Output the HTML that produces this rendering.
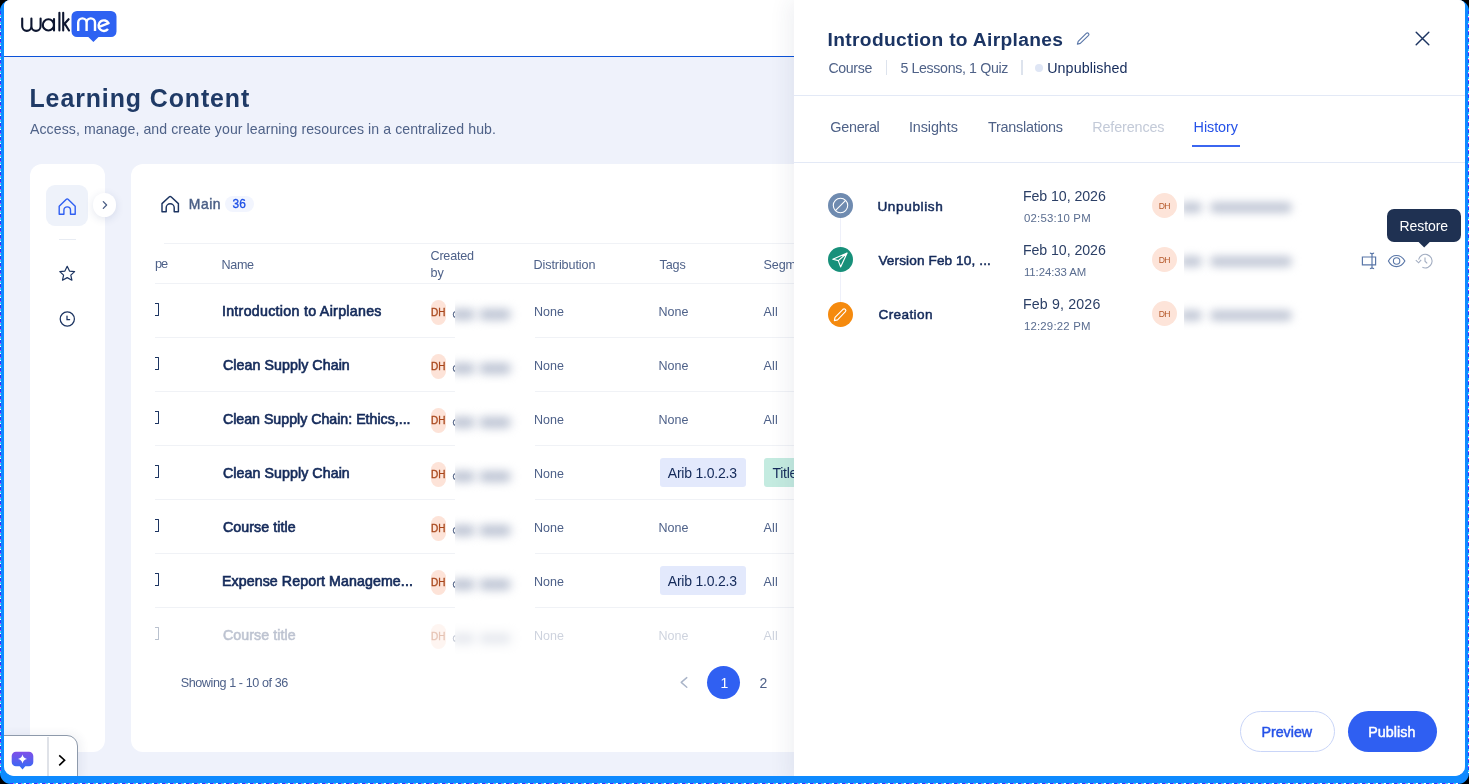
<!DOCTYPE html>
<html><head><meta charset="utf-8">
<style>
*{box-sizing:border-box;margin:0;padding:0}
html,body{width:1469px;height:784px;overflow:hidden;background:#000;font-family:"Liberation Sans",sans-serif}
.abs{position:absolute}
.t{position:absolute;white-space:nowrap}
#frame{position:absolute;left:0;top:0;width:1469px;height:784px;background:#0e8aff;border-radius:11px}
#noiseL{position:absolute;left:0;top:11px;width:1px;height:762px;background:repeating-linear-gradient(180deg,#2a3cff 0 3px,#e040f0 3px 4px,#30d8ff 4px 6px,#ffffff 6px 7px)}
#noiseR{position:absolute;left:1468px;top:11px;width:1px;height:762px;background:repeating-linear-gradient(180deg,#2a3cff 0 3px,#30d8ff 3px 5px,#ffffff 5px 6px,#e040f0 6px 7px)}
#noiseB{position:absolute;left:10px;top:783px;width:1449px;height:1px;background:repeating-linear-gradient(90deg,#2a3cff 0 3px,#e040f0 3px 4px,#30d8ff 4px 6px,#ffffff 6px 8px)}
#screen{position:absolute;left:4px;top:0;width:1461px;height:776px;background:#eff2fb;border-radius:6px 6px 10px 10px;overflow:hidden}
#inner{position:absolute;left:-4px;top:0;width:1469px;height:784px;will-change:transform}
.row-line{position:absolute;left:155px;width:640px;height:1px;background:#f0f2f6}
.av{position:absolute;width:15px;height:25px;border-radius:8px;background:#fde3d8}
.blur{position:absolute;left:455px;width:80px;height:50px;background:#fff;overflow:hidden}
.blur i{position:absolute;top:16.5px;height:11px;border-radius:5px;background:#bcc3d3;filter:blur(4.8px)}
.brk{position:absolute;left:155.3px;width:3.3px;height:13px;border:1.5px solid #1c3461;border-left:none;border-radius:0 1px 1px 0}
.tag{position:absolute;height:29px;border-radius:3px}
.hcirc{position:absolute;left:827.7px;width:25px;height:25px;border-radius:50%}
.hav{position:absolute;left:1152.2px;width:25px;height:25px;border-radius:50%;background:#fde4d9}
.hblur{position:absolute;left:1184px;width:120px;height:30px;overflow:hidden;background:#fff}
.hblur i{position:absolute;top:10px;height:11px;border-radius:5px;background:#c3c9d7;filter:blur(4.2px)}
</style></head>
<body>
<div id="frame"></div>
<div id="noiseL"></div><div id="noiseR"></div><div id="noiseB"></div>
<div id="screen"><div id="inner">

<!-- header -->
<div class="abs" style="left:0;top:0;width:1469px;height:57px;background:#fff;border-bottom:1px solid #0b52d8"></div>
<!-- walkme logo -->
<svg class="abs" style="left:0;top:0" width="130" height="50" viewBox="0 0 130 50">
 <g fill="none" stroke="#0d1630" stroke-width="2.1" stroke-linecap="round" stroke-linejoin="round">
  <path d="M22.2 18.5 V26.3 a4.6 4.6 0 0 0 9.2 0 V18.5 M31.4 26.3 a4.6 4.6 0 0 0 9.2 0 V18.5"/>
  <circle cx="48.4" cy="24.9" r="5.6"/>
  <path d="M54 19 V30.5"/>
  <path d="M59.4 12.8 V30.5"/>
  <path d="M63.2 12.8 V30.5 M63.2 25.2 L68.6 19.2 M64.8 23.8 L69 30.5"/>
 </g>
 <path d="M77 11 H111 a5.5 5.5 0 0 1 5.5 5.5 V31.5 a5.5 5.5 0 0 1 -5.5 5.5 H98.5 L93.4 42 L88.3 37 H77 a5.5 5.5 0 0 1 -5.5 -5.5 V16.5 a5.5 5.5 0 0 1 5.5 -5.5 Z" fill="#2e62f2"/>
 <g fill="none" stroke="#fff" stroke-width="2.4" stroke-linecap="butt" stroke-linejoin="round">
  <path d="M78.2 31 V22.6 a4.2 4.2 0 0 1 8.4 0 V31 M86.6 22.6 a4.2 4.2 0 0 1 8.4 0 V31"/>
  <path d="M99.2 26.8 L108.6 23.2 a5.3 5.3 0 1 0 -0.6 5.8"/>
 </g>
</svg>

<!-- page title etc -->
<!-- left nav card -->
<div class="abs" style="left:30px;top:164px;width:74.5px;height:587.7px;background:#fff;border-radius:12px"></div>
<div class="abs" style="left:46.3px;top:184.8px;width:41.8px;height:41.7px;background:#eef2fa;border-radius:9px"></div>
<svg class="abs" style="left:56px;top:195px" width="24" height="24" viewBox="0 0 24 24">
 <path d="M3.2 11.2 L10.1 4.4 Q11.2 3.3 12.3 4.4 L19.2 11.2 V19.2 H14.5 V15.2 a3.3 3.3 0 0 0 -6.6 0 V19.2 H3.2 Z" fill="none" stroke="#2f5ff2" stroke-width="1.4" stroke-linejoin="round"/>
</svg>
<div class="abs" style="left:59px;top:239px;width:17px;height:1.3px;background:#e8ecf3"></div>
<svg class="abs" style="left:56px;top:262.8px" width="24" height="22" viewBox="0 0 24 22">
 <path d="M11.2 3.3 L13.5 8.1 L18.6 8.6 L14.8 12.1 L15.9 17.2 L11.2 14.6 L6.5 17.2 L7.6 12.1 L3.8 8.6 L8.9 8.1 Z" fill="none" stroke="#1c3461" stroke-width="1.2" stroke-linejoin="round"/>
</svg>
<svg class="abs" style="left:56px;top:308px" width="24" height="22" viewBox="0 0 24 22">
 <circle cx="11.3" cy="11" r="7.1" fill="none" stroke="#1c3461" stroke-width="1.25"/>
 <path d="M11 8 V11.5 H13.6" fill="none" stroke="#1c3461" stroke-width="1.25" stroke-linecap="round"/>
</svg>

<!-- main card -->
<div class="abs" style="left:131px;top:164px;width:800px;height:587.7px;background:#fff;border-radius:12px"></div>
<!-- expand circle -->
<div class="abs" style="left:92.8px;top:193.2px;width:23.5px;height:23.5px;border-radius:50%;background:#fff;box-shadow:0 2px 8px rgba(40,60,120,0.13)"></div>
<svg class="abs" style="left:98px;top:198px" width="14" height="14" viewBox="0 0 14 14">
 <path d="M5.3 3.6 L8.6 7 L5.3 10.4" fill="none" stroke="#4b5f86" stroke-width="1.3" stroke-linecap="round" stroke-linejoin="round"/>
</svg>
<!-- breadcrumb home -->
<svg class="abs" style="left:158px;top:192px" width="24" height="24" viewBox="0 0 24 24">
 <path d="M4 11.6 L11.1 5 Q12.2 4 13.3 5 L20.4 11.6 V19.7 H16.2 V15.8 a4 4 0 0 0 -8 0 V19.7 H4 Z" fill="none" stroke="#1c3461" stroke-width="1.45" stroke-linejoin="round"/>
</svg>
<div class="abs" style="left:225px;top:195.7px;width:29px;height:16.5px;border-radius:9px;background:#f2f5fe"></div>

<!-- table lines -->
<div class="row-line" style="left:164px;top:243px"></div>
<div class="row-line" style="top:282.5px"></div>
<div class="row-line" style="top:337px"></div>
<div class="row-line" style="top:391px"></div>
<div class="row-line" style="top:445px"></div>
<div class="row-line" style="top:499px"></div>
<div class="row-line" style="top:553px"></div>
<div class="row-line" style="top:607px"></div>

<!-- row decorations -->
<div class="brk" style="top:303px"></div>
<div class="brk" style="top:357px"></div>
<div class="brk" style="top:411px"></div>
<div class="brk" style="top:465px"></div>
<div class="brk" style="top:519px"></div>
<div class="brk" style="top:573px"></div>
<div class="brk" style="top:627px;opacity:0.3"></div>

<div class="av" style="left:430.5px;top:299.8px"></div>
<div class="av" style="left:430.5px;top:353.8px"></div>
<div class="av" style="left:430.5px;top:407.8px"></div>
<div class="av" style="left:430.5px;top:461.8px"></div>
<div class="av" style="left:430.5px;top:515.8px"></div>
<div class="av" style="left:430.5px;top:569.8px"></div>
<div class="av" style="left:430.5px;top:623.8px;opacity:0.35"></div>

<svg class="abs" style="left:451px;top:309px;" width="5" height="10" viewBox="0 0 5 10"><path d="M4.2 2.6 A2.6 3 0 0 0 4.2 8.4" fill="none" stroke="#5b6b8c" stroke-width="1.1"/></svg>
<svg class="abs" style="left:451px;top:363px;" width="5" height="10" viewBox="0 0 5 10"><path d="M4.2 2.6 A2.6 3 0 0 0 4.2 8.4" fill="none" stroke="#5b6b8c" stroke-width="1.1"/></svg>
<svg class="abs" style="left:451px;top:417px;" width="5" height="10" viewBox="0 0 5 10"><path d="M4.2 2.6 A2.6 3 0 0 0 4.2 8.4" fill="none" stroke="#5b6b8c" stroke-width="1.1"/></svg>
<svg class="abs" style="left:451px;top:471px;" width="5" height="10" viewBox="0 0 5 10"><path d="M4.2 2.6 A2.6 3 0 0 0 4.2 8.4" fill="none" stroke="#5b6b8c" stroke-width="1.1"/></svg>
<svg class="abs" style="left:451px;top:525px;" width="5" height="10" viewBox="0 0 5 10"><path d="M4.2 2.6 A2.6 3 0 0 0 4.2 8.4" fill="none" stroke="#5b6b8c" stroke-width="1.1"/></svg>
<svg class="abs" style="left:451px;top:579px;" width="5" height="10" viewBox="0 0 5 10"><path d="M4.2 2.6 A2.6 3 0 0 0 4.2 8.4" fill="none" stroke="#5b6b8c" stroke-width="1.1"/></svg>
<svg class="abs" style="left:451px;top:633px;opacity:0.35;" width="5" height="10" viewBox="0 0 5 10"><path d="M4.2 2.6 A2.6 3 0 0 0 4.2 8.4" fill="none" stroke="#5b6b8c" stroke-width="1.1"/></svg>
<div class="blur" style="top:292px"><i style="left:-4px;width:24px"></i><i style="left:24px;width:32px"></i></div>
<div class="blur" style="top:346px"><i style="left:-4px;width:24px"></i><i style="left:24px;width:32px"></i></div>
<div class="blur" style="top:400px"><i style="left:-4px;width:24px"></i><i style="left:24px;width:32px"></i></div>
<div class="blur" style="top:454px"><i style="left:-4px;width:24px"></i><i style="left:24px;width:32px"></i></div>
<div class="blur" style="top:508px"><i style="left:-4px;width:24px"></i><i style="left:24px;width:32px"></i></div>
<div class="blur" style="top:562px"><i style="left:-4px;width:24px"></i><i style="left:24px;width:32px"></i></div>
<div class="blur" style="top:616px;height:44px;opacity:0.35"><i style="left:-4px;width:24px"></i><i style="left:24px;width:32px"></i></div>

<div class="tag" style="left:660px;top:458px;width:86px;background:#e3e9fc"></div>
<div class="tag" style="left:764px;top:458px;width:40px;background:#c4ebe0"></div>
<div class="tag" style="left:660px;top:566px;width:86px;background:#e3e9fc"></div>

<!-- pagination -->
<svg class="abs" style="left:676px;top:674px" width="16" height="17" viewBox="0 0 16 17">
 <path d="M10.8 3.6 L5.2 8.4 L10.8 13.2" fill="none" stroke="#a9b4c8" stroke-width="1.4" stroke-linecap="round" stroke-linejoin="round"/>
</svg>
<div class="abs" style="left:706.9px;top:665.8px;width:33.2px;height:33.2px;border-radius:50%;background:#3060f2"></div>

<div class="t" style="left:29.50px;top:86.12px;font-size:24.9px;line-height:24.9px;font-weight:bold;color:#1f3a66;letter-spacing:0.917px;">Learning Content</div>
<div class="t" style="left:30.00px;top:122.36px;font-size:14.1px;line-height:14.1px;font-weight:normal;color:#4f6288;letter-spacing:0.085px;">Access, manage, and create your learning resources in a centralized hub.</div>
<div class="t" style="left:188.82px;top:198.13px;font-size:13.9px;line-height:13.9px;font-weight:normal;color:#4b5f86;letter-spacing:0.523px;-webkit-text-stroke:0.45px #4b5f86;">Main</div>
<div class="t" style="left:232.45px;top:198.73px;font-size:11.9px;line-height:11.9px;font-weight:normal;color:#1d4fe6;letter-spacing:0.087px;-webkit-text-stroke:0.3px #1d4fe6;">36</div>
<div class="t" style="left:155.00px;top:258.46px;font-size:12.8px;line-height:12.8px;font-weight:normal;color:#4e6189;letter-spacing:-1.117px;">pe</div>
<div class="t" style="left:221.60px;top:258.63px;font-size:12.6px;line-height:12.6px;font-weight:normal;color:#4e6189;letter-spacing:-0.397px;">Name</div>
<div class="t" style="left:430.50px;top:249.83px;font-size:12.6px;line-height:12.6px;font-weight:normal;color:#4e6189;letter-spacing:-0.217px;">Created</div>
<div class="t" style="left:430.50px;top:266.83px;font-size:12.6px;line-height:12.6px;font-weight:normal;color:#4e6189;letter-spacing:-0.050px;">by</div>
<div class="t" style="left:533.50px;top:258.63px;font-size:12.6px;line-height:12.6px;font-weight:normal;color:#4e6189;letter-spacing:-0.100px;">Distribution</div>
<div class="t" style="left:659.50px;top:258.63px;font-size:12.6px;line-height:12.6px;font-weight:normal;color:#4e6189;letter-spacing:-0.100px;">Tags</div>
<div class="t" style="left:763.50px;top:258.63px;font-size:12.6px;line-height:12.6px;font-weight:normal;color:#4e6189;letter-spacing:-0.100px;">Segm</div>
<div class="t" style="left:221.92px;top:304.48px;font-size:14.2px;line-height:14.2px;font-weight:normal;color:#142a5a;letter-spacing:0.306px;-webkit-text-stroke:0.65px #142a5a;">Introduction to Airplanes</div>
<div class="t" style="left:430.95px;top:307.64px;font-size:10.0px;line-height:10.0px;font-weight:normal;color:#a8471c;letter-spacing:-0.022px;-webkit-text-stroke:0.3px #a8471c;">DH</div>
<div class="t" style="left:534.00px;top:306.02px;font-size:12.5px;line-height:12.5px;font-weight:normal;color:#4e6189;letter-spacing:0.023px;">None</div>
<div class="t" style="left:658.50px;top:306.02px;font-size:12.5px;line-height:12.5px;font-weight:normal;color:#4e6189;letter-spacing:0.023px;">None</div>
<div class="t" style="left:763.50px;top:306.02px;font-size:12.5px;line-height:12.5px;font-weight:normal;color:#4e6189;letter-spacing:0.200px;">All</div>
<div class="t" style="left:222.92px;top:358.48px;font-size:14.2px;line-height:14.2px;font-weight:normal;color:#142a5a;letter-spacing:0.085px;-webkit-text-stroke:0.65px #142a5a;">Clean Supply Chain</div>
<div class="t" style="left:430.95px;top:361.64px;font-size:10.0px;line-height:10.0px;font-weight:normal;color:#a8471c;letter-spacing:-0.022px;-webkit-text-stroke:0.3px #a8471c;">DH</div>
<div class="t" style="left:534.00px;top:360.02px;font-size:12.5px;line-height:12.5px;font-weight:normal;color:#4e6189;letter-spacing:0.023px;">None</div>
<div class="t" style="left:658.50px;top:360.02px;font-size:12.5px;line-height:12.5px;font-weight:normal;color:#4e6189;letter-spacing:0.023px;">None</div>
<div class="t" style="left:763.50px;top:360.02px;font-size:12.5px;line-height:12.5px;font-weight:normal;color:#4e6189;letter-spacing:0.200px;">All</div>
<div class="t" style="left:222.92px;top:412.48px;font-size:14.2px;line-height:14.2px;font-weight:normal;color:#142a5a;letter-spacing:-0.003px;-webkit-text-stroke:0.65px #142a5a;">Clean Supply Chain: Ethics,...</div>
<div class="t" style="left:430.95px;top:415.64px;font-size:10.0px;line-height:10.0px;font-weight:normal;color:#a8471c;letter-spacing:-0.022px;-webkit-text-stroke:0.3px #a8471c;">DH</div>
<div class="t" style="left:534.00px;top:414.02px;font-size:12.5px;line-height:12.5px;font-weight:normal;color:#4e6189;letter-spacing:0.023px;">None</div>
<div class="t" style="left:658.50px;top:414.02px;font-size:12.5px;line-height:12.5px;font-weight:normal;color:#4e6189;letter-spacing:0.023px;">None</div>
<div class="t" style="left:763.50px;top:414.02px;font-size:12.5px;line-height:12.5px;font-weight:normal;color:#4e6189;letter-spacing:0.200px;">All</div>
<div class="t" style="left:222.92px;top:466.48px;font-size:14.2px;line-height:14.2px;font-weight:normal;color:#142a5a;letter-spacing:0.085px;-webkit-text-stroke:0.65px #142a5a;">Clean Supply Chain</div>
<div class="t" style="left:430.95px;top:469.64px;font-size:10.0px;line-height:10.0px;font-weight:normal;color:#a8471c;letter-spacing:-0.022px;-webkit-text-stroke:0.3px #a8471c;">DH</div>
<div class="t" style="left:534.00px;top:468.02px;font-size:12.5px;line-height:12.5px;font-weight:normal;color:#4e6189;letter-spacing:0.023px;">None</div>
<div class="t" style="left:667.80px;top:466.05px;font-size:14px;line-height:14px;font-weight:normal;color:#142a5a;letter-spacing:-0.219px;">Arib 1.0.2.3</div>
<div class="t" style="left:772.40px;top:466.05px;font-size:14px;line-height:14px;font-weight:normal;color:#142a5a;letter-spacing:-0.250px;">Title</div>
<div class="t" style="left:222.92px;top:520.48px;font-size:14.2px;line-height:14.2px;font-weight:normal;color:#142a5a;letter-spacing:0.100px;-webkit-text-stroke:0.65px #142a5a;">Course title</div>
<div class="t" style="left:430.95px;top:523.63px;font-size:10.0px;line-height:10.0px;font-weight:normal;color:#a8471c;letter-spacing:-0.022px;-webkit-text-stroke:0.3px #a8471c;">DH</div>
<div class="t" style="left:534.00px;top:522.02px;font-size:12.5px;line-height:12.5px;font-weight:normal;color:#4e6189;letter-spacing:0.023px;">None</div>
<div class="t" style="left:658.50px;top:522.02px;font-size:12.5px;line-height:12.5px;font-weight:normal;color:#4e6189;letter-spacing:0.023px;">None</div>
<div class="t" style="left:763.50px;top:522.02px;font-size:12.5px;line-height:12.5px;font-weight:normal;color:#4e6189;letter-spacing:0.200px;">All</div>
<div class="t" style="left:221.92px;top:574.48px;font-size:14.2px;line-height:14.2px;font-weight:normal;color:#142a5a;letter-spacing:0.100px;-webkit-text-stroke:0.65px #142a5a;">Expense Report Manageme...</div>
<div class="t" style="left:430.95px;top:577.63px;font-size:10.0px;line-height:10.0px;font-weight:normal;color:#a8471c;letter-spacing:-0.022px;-webkit-text-stroke:0.3px #a8471c;">DH</div>
<div class="t" style="left:534.00px;top:576.02px;font-size:12.5px;line-height:12.5px;font-weight:normal;color:#4e6189;letter-spacing:0.023px;">None</div>
<div class="t" style="left:667.80px;top:574.05px;font-size:14px;line-height:14px;font-weight:normal;color:#142a5a;letter-spacing:-0.219px;">Arib 1.0.2.3</div>
<div class="t" style="left:763.50px;top:576.02px;font-size:12.5px;line-height:12.5px;font-weight:normal;color:#4e6189;letter-spacing:0.200px;">All</div>
<div class="t" style="left:222.92px;top:628.48px;font-size:14.2px;line-height:14.2px;font-weight:normal;color:#142a5a;letter-spacing:0.100px;-webkit-text-stroke:0.65px #142a5a;opacity:0.28;">Course title</div>
<div class="t" style="left:430.95px;top:631.63px;font-size:10.0px;line-height:10.0px;font-weight:normal;color:#a8471c;letter-spacing:-0.022px;-webkit-text-stroke:0.3px #a8471c;opacity:0.28;">DH</div>
<div class="t" style="left:534.00px;top:630.02px;font-size:12.5px;line-height:12.5px;font-weight:normal;color:#4e6189;letter-spacing:0.023px;opacity:0.28;">None</div>
<div class="t" style="left:658.50px;top:630.02px;font-size:12.5px;line-height:12.5px;font-weight:normal;color:#4e6189;letter-spacing:0.023px;opacity:0.28;">None</div>
<div class="t" style="left:763.50px;top:630.02px;font-size:12.5px;line-height:12.5px;font-weight:normal;color:#4e6189;letter-spacing:0.200px;opacity:0.28;">All</div>
<div class="t" style="left:180.70px;top:676.73px;font-size:12.6px;line-height:12.6px;font-weight:normal;color:#4e6189;letter-spacing:-0.417px;">Showing 1 - 10 of 36</div>
<div class="t" style="left:720.50px;top:676.05px;font-size:14px;line-height:14px;font-weight:normal;color:#ffffff;letter-spacing:0.000px;">1</div>
<div class="t" style="left:759.60px;top:676.05px;font-size:14px;line-height:14px;font-weight:normal;color:#4e6189;letter-spacing:0.000px;">2</div>

<!-- bottom-left widget -->
<div class="abs" style="left:-1px;top:735.4px;width:79px;height:45px;background:#fff;border:1.3px solid #8e9aab;border-radius:0 11px 0 0;box-shadow:3px -1px 10px rgba(40,60,100,0.07)"></div>
<div class="abs" style="left:47.3px;top:736.5px;width:1.6px;height:40px;background:#dfe2e8"></div>
<svg class="abs" style="left:10px;top:750px" width="26" height="22" viewBox="0 0 26 22">
 <defs><linearGradient id="cg" x1="0" y1="0" x2="0" y2="1"><stop offset="0" stop-color="#8150e8"/><stop offset="1" stop-color="#2f6cf6"/></linearGradient></defs>
 <path d="M6 1.7 H19 a4.3 4.3 0 0 1 4.3 4.3 V12 a4.3 4.3 0 0 1 -4.3 4.3 H15.3 L12.5 19.6 L9.7 16.3 H6 a4.3 4.3 0 0 1 -4.3 -4.3 V6 a4.3 4.3 0 0 1 4.3 -4.3 Z" fill="url(#cg)"/>
 <path d="M12.5 4.6 Q13.3 8.2 17 9 Q13.3 9.8 12.5 13.4 Q11.7 9.8 8 9 Q11.7 8.2 12.5 4.6 Z" fill="#fff"/>
</svg>
<svg class="abs" style="left:54px;top:752px" width="16" height="16" viewBox="0 0 16 16">
 <path d="M5.2 3.3 L10.6 8.2 L5.2 13.3" fill="none" stroke="#000" stroke-width="1.6" stroke-linejoin="miter"/>
</svg>

<!-- right panel -->
<div class="abs" style="left:794px;top:0;width:680px;height:784px;background:#fff;box-shadow:-5px 0 20px rgba(40,55,100,0.075)"></div>
<svg class="abs" style="left:1074px;top:29px" width="20" height="19" viewBox="0 0 20 19">
 <path d="M3.4 15.1 L4.2 12.3 L12.5 4.2 a1.5 1.5 0 0 1 2.1 2.1 L6.3 14.4 Z" fill="none" stroke="#5a77a8" stroke-width="1.15" stroke-linejoin="round"/>
</svg>
<svg class="abs" style="left:1410px;top:26px" width="25" height="25" viewBox="0 0 25 25">
 <path d="M6.2 6.2 L18.8 18.8 M18.8 6.2 L6.2 18.8" fill="none" stroke="#1c3461" stroke-width="1.45" stroke-linecap="round"/>
</svg>
<div class="abs" style="left:885.6px;top:60px;width:1.3px;height:14.5px;background:#dde3ed"></div>
<div class="abs" style="left:1021.4px;top:60px;width:1.3px;height:14.5px;background:#dde3ed"></div>
<div class="abs" style="left:1035px;top:64px;width:8px;height:8px;border-radius:50%;background:#dfe6f5"></div>
<div class="abs" style="left:794px;top:94.6px;width:671px;height:1.2px;background:#e3e9f6"></div>
<div class="abs" style="left:1191.8px;top:145px;width:48.7px;height:2.2px;background:#3b66f0"></div>
<div class="abs" style="left:794px;top:162px;width:671px;height:1.2px;background:#e3e9f6"></div>

<!-- history -->
<div class="abs" style="left:839.6px;top:218px;width:1.3px;height:86px;background:#eef0fa"></div>
<div class="hcirc" style="top:193.3px;background:#6f8bb0"></div>
<svg class="abs" style="left:827.7px;top:193.3px" width="25" height="25" viewBox="0 0 25 25">
 <circle cx="12.5" cy="12.5" r="7.2" fill="none" stroke="#fff" stroke-width="1.1"/>
 <path d="M17.6 7.4 L7.4 17.6" stroke="#fff" stroke-width="1.1"/>
</svg>
<div class="hcirc" style="top:247.4px;background:#17907a"></div>
<svg class="abs" style="left:827.7px;top:247.4px" width="25" height="25" viewBox="0 0 25 25">
 <path d="M19.1 6 L4.8 12.2 L10.3 13.6 L12.6 19.9 Z M10.3 13.6 L19.1 6" fill="none" stroke="#fff" stroke-width="1.15" stroke-linejoin="round"/>
</svg>
<div class="hcirc" style="top:301.9px;background:#f58a0e"></div>
<svg class="abs" style="left:827.7px;top:301.9px" width="25" height="25" viewBox="0 0 25 25">
 <path d="M6.4 18.6 L7 15.3 L15 7.3 a1.7 1.7 0 0 1 2.4 2.4 L9.6 17.9 Z" fill="none" stroke="#fff" stroke-width="1.15" stroke-linejoin="round"/>
</svg>
<div class="hav" style="top:193.3px"></div>
<div class="hav" style="top:247.3px"></div>
<div class="hav" style="top:301.3px"></div>
<div class="hblur" style="top:192px"><i style="left:-4px;width:22px"></i><i style="left:26px;width:82px"></i></div>
<div class="hblur" style="top:246px"><i style="left:-4px;width:22px"></i><i style="left:26px;width:82px"></i></div>
<div class="hblur" style="top:300px"><i style="left:-4px;width:22px"></i><i style="left:26px;width:82px"></i></div>

<!-- actions -->
<svg class="abs" style="left:1360px;top:251px" width="20" height="20" viewBox="0 0 20 20">
 <path d="M2.4 6 H15.6 V13.8 H2.4 Z" fill="none" stroke="#5a77a8" stroke-width="1.2"/>
 <path d="M12 2.2 V17.6 M9.9 2.2 Q12 2.2 12 3.6 Q12 2.2 14.1 2.2 M9.9 17.6 Q12 17.6 12 16.2 Q12 17.6 14.1 17.6" fill="none" stroke="#5a77a8" stroke-width="1.2"/>
</svg>
<svg class="abs" style="left:1386px;top:251px" width="22" height="20" viewBox="0 0 22 20">
 <path d="M2.4 10 C6.2 2.6 14.6 2.6 18.9 10 C14.6 17.4 6.2 17.4 2.4 10 Z" fill="none" stroke="#5a77a8" stroke-width="1.15" stroke-linejoin="round"/>
 <circle cx="10.6" cy="10" r="3.2" fill="none" stroke="#5a77a8" stroke-width="1.1"/>
</svg>
<svg class="abs" style="left:1413px;top:251px" width="22" height="20" viewBox="0 0 22 20">
 <path d="M5.6 8.6 A6.8 6.8 0 1 1 9.4 16.3" fill="none" stroke="#a3aec2" stroke-width="1.1"/>
 <path d="M2.8 9.2 L5.6 11.8 L8.2 8.8" fill="none" stroke="#a3aec2" stroke-width="1.1"/>
 <path d="M12 6.6 V10.2 L14.2 12.4" fill="none" stroke="#a3aec2" stroke-width="1.1"/>
</svg>
<!-- tooltip -->
<div class="abs" style="left:1387.2px;top:208.7px;width:73.8px;height:33.1px;border-radius:7px;background:#1f3152"></div>
<svg class="abs" style="left:1416px;top:241px" width="17" height="8" viewBox="0 0 17 8">
 <path d="M1.6 0 L8.2 6.6 L14.8 0 Z" fill="#1f3152"/>
</svg>

<!-- buttons -->
<div class="abs" style="left:1239.7px;top:710.5px;width:95.1px;height:41.2px;border-radius:21px;border:1px solid #c9d5f8;background:#fff"></div>
<div class="abs" style="left:1347.6px;top:710.5px;width:89.5px;height:41.2px;border-radius:21px;background:#2f5ff2"></div>

<div class="t" style="left:827.60px;top:30.45px;font-size:19.2px;line-height:19.2px;font-weight:bold;color:#1b3463;letter-spacing:0.332px;">Introduction to Airplanes</div>
<div class="t" style="left:828.50px;top:60.78px;font-size:14.2px;line-height:14.2px;font-weight:normal;color:#4f6288;letter-spacing:-0.389px;">Course</div>
<div class="t" style="left:900.40px;top:60.78px;font-size:14.2px;line-height:14.2px;font-weight:normal;color:#4f6288;letter-spacing:-0.348px;">5 Lessons, 1 Quiz</div>
<div class="t" style="left:1047.20px;top:60.70px;font-size:14.3px;line-height:14.3px;font-weight:normal;color:#142a5a;letter-spacing:0.077px;">Unpublished</div>
<div class="t" style="left:830.30px;top:120.01px;font-size:14.4px;line-height:14.4px;font-weight:normal;color:#4f6288;letter-spacing:-0.283px;">General</div>
<div class="t" style="left:908.90px;top:120.01px;font-size:14.4px;line-height:14.4px;font-weight:normal;color:#4f6288;letter-spacing:-0.086px;">Insights</div>
<div class="t" style="left:988.10px;top:120.01px;font-size:14.4px;line-height:14.4px;font-weight:normal;color:#4f6288;letter-spacing:-0.268px;">Translations</div>
<div class="t" style="left:1092.20px;top:120.01px;font-size:14.4px;line-height:14.4px;font-weight:normal;color:#c3cad8;letter-spacing:-0.144px;">References</div>
<div class="t" style="left:1193.60px;top:120.01px;font-size:14.4px;line-height:14.4px;font-weight:normal;color:#2552e8;letter-spacing:-0.080px;">History</div>
<div class="t" style="left:877.45px;top:199.59px;font-size:13.6px;line-height:13.6px;font-weight:normal;color:#142a5a;letter-spacing:0.613px;-webkit-text-stroke:0.5px #142a5a;">Unpublish</div>
<div class="t" style="left:1022.90px;top:188.98px;font-size:14.2px;line-height:14.2px;font-weight:normal;color:#2b3f66;letter-spacing:-0.066px;">Feb 10, 2026</div>
<div class="t" style="left:1023.90px;top:213.25px;font-size:11.4px;line-height:11.4px;font-weight:normal;color:#5a6d90;letter-spacing:0.220px;">02:53:10 PM</div>
<div class="t" style="left:1158.70px;top:201.82px;font-size:8.6px;line-height:8.6px;font-weight:normal;color:#b5582a;letter-spacing:-0.606px;">DH</div>
<div class="t" style="left:878.45px;top:253.59px;font-size:13.6px;line-height:13.6px;font-weight:normal;color:#142a5a;letter-spacing:0.114px;-webkit-text-stroke:0.5px #142a5a;">Version Feb 10, ...</div>
<div class="t" style="left:1022.90px;top:242.98px;font-size:14.2px;line-height:14.2px;font-weight:normal;color:#2b3f66;letter-spacing:-0.066px;">Feb 10, 2026</div>
<div class="t" style="left:1023.90px;top:267.25px;font-size:11.4px;line-height:11.4px;font-weight:normal;color:#5a6d90;letter-spacing:-0.066px;">11:24:33 AM</div>
<div class="t" style="left:1158.70px;top:255.82px;font-size:8.6px;line-height:8.6px;font-weight:normal;color:#b5582a;letter-spacing:-0.606px;">DH</div>
<div class="t" style="left:878.45px;top:307.59px;font-size:13.6px;line-height:13.6px;font-weight:normal;color:#142a5a;letter-spacing:0.383px;-webkit-text-stroke:0.5px #142a5a;">Creation</div>
<div class="t" style="left:1022.90px;top:296.98px;font-size:14.2px;line-height:14.2px;font-weight:normal;color:#2b3f66;letter-spacing:0.167px;">Feb 9, 2026</div>
<div class="t" style="left:1023.90px;top:321.25px;font-size:11.4px;line-height:11.4px;font-weight:normal;color:#5a6d90;letter-spacing:0.200px;">12:29:22 PM</div>
<div class="t" style="left:1158.70px;top:309.82px;font-size:8.6px;line-height:8.6px;font-weight:normal;color:#b5582a;letter-spacing:-0.606px;">DH</div>
<div class="t" style="left:1399.50px;top:218.75px;font-size:14px;line-height:14px;font-weight:normal;color:#ffffff;letter-spacing:-0.089px;">Restore</div>
<div class="t" style="left:1261.42px;top:724.60px;font-size:14.3px;line-height:14.3px;font-weight:normal;color:#2552e8;letter-spacing:-0.012px;-webkit-text-stroke:0.45px #2552e8;">Preview</div>
<div class="t" style="left:1368.22px;top:724.60px;font-size:14.3px;line-height:14.3px;font-weight:normal;color:#ffffff;letter-spacing:0.052px;-webkit-text-stroke:0.45px #ffffff;">Publish</div>

</div></div>
</body></html>
